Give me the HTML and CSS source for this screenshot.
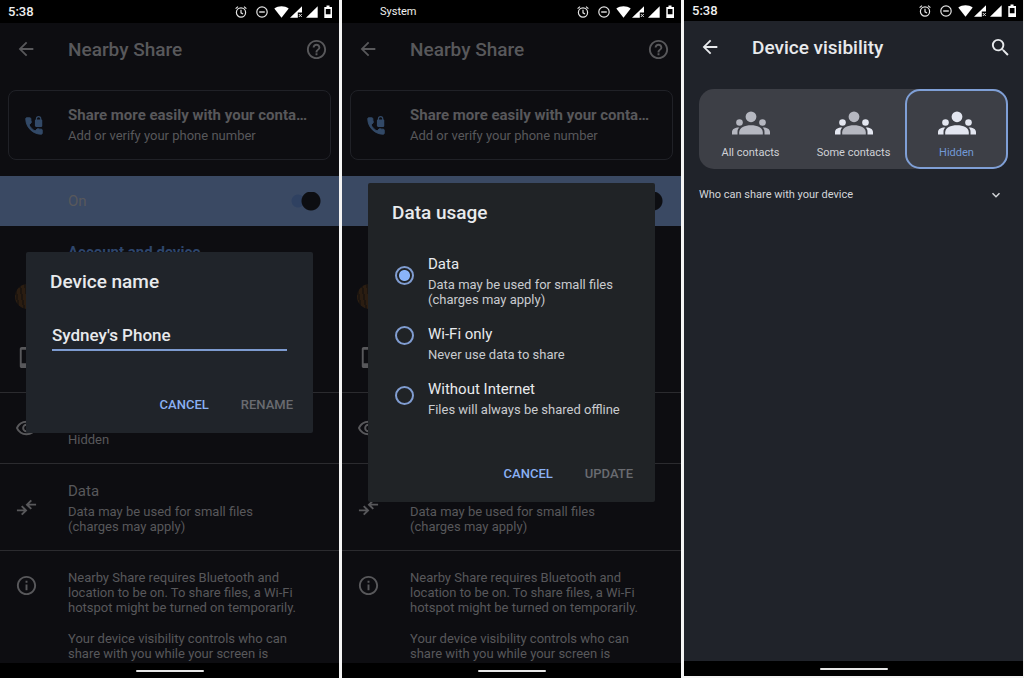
FILE: index.html
```html
<!DOCTYPE html>
<html lang="en">
<head>
<meta charset="utf-8">
<meta name="viewport" content="width=device-width, initial-scale=1">
<title>Nearby Share</title>
<link rel="stylesheet" href="styles.css">
</head>
<body>
<svg class="sprite" aria-hidden="true">
  <symbol id="status" viewBox="0 0 98 16">
    <g fill="none" stroke="#e4e4e4" stroke-width="1.2">
      <circle cx="6" cy="8.5" r="4.6"/><path d="M6 5.8v3l2 1.3M.6 4.6 3 2.6M11.4 4.6 9 2.6"/>
      <circle cx="27" cy="8" r="5.2"/><path d="M24.2 8h5.6" stroke-width="1.4"/>
    </g>
    <g fill="#fff">
      <path d="M39.300 4.600C43.400 1.400 49.600 1.400 53.700 4.600L46.500 13.800Z"/>
      <path d="M67 2.200V8.500H62.800V13.800H55Z"/>
      <path d="M63.800 10l3 3M66.800 10l-3 3" stroke="#ddd" stroke-width="1"/>
      <path d="M82.700 2.200V13.800H71Z"/>
      <path fill-rule="evenodd" d="M91.500 1.500h3v1.500H97V14H89.300V3h2.200ZM90.800 5v5.200h4.700V5Z"/>
    </g>
  </symbol>
  <symbol id="back" viewBox="0 0 24 24"><path d="M20 11H7.830l5.590-5.590L12 4l-8 8 8 8 1.410-1.410L7.830 13H20z"/></symbol>
  <symbol id="help" viewBox="0 0 24 24"><path d="M11 18h2v-2h-2v2zm1-16C6.480 2 2 6.480 2 12s4.480 10 10 10 10-4.480 10-10S17.520 2 12 2zm0 18c-4.410 0-8-3.590-8-8s3.590-8 8-8 8 3.590 8 8-3.590 8-8 8zm0-14c-2.210 0-4 1.790-4 4h2c0-1.100.9-2 2-2s2 .9 2 2c0 2-3 1.750-3 5h2c0-2.250 3-2.500 3-5 0-2.210-1.790-4-4-4z"/></symbol>
  <symbol id="info" viewBox="0 0 24 24"><path d="M11 7h2v2h-2zm0 4h2v6h-2zm1-9C6.480 2 2 6.480 2 12s4.480 10 10 10 10-4.480 10-10S17.520 2 12 2zm0 18c-4.410 0-8-3.590-8-8s3.590-8 8-8 8 3.590 8 8-3.590 8-8 8z"/></symbol>
  <symbol id="phone-lock" viewBox="0 0 24 24"><path d="M20 15.500c-1.250 0-2.450-.2-3.570-.57-.35-.11-.74-.03-1.020.24l-2.200 2.200c-2.830-1.440-5.150-3.750-6.590-6.580l2.200-2.210c.28-.27.36-.66.25-1.010C8.700 6.450 8.500 5.250 8.500 4c0-.55-.45-1-1-1H4c-.55 0-1 .45-1 1 0 9.390 7.610 17 17 17 .55 0 1-.45 1-1v-3.500c0-.55-.45-1-1-1z" stroke="currentColor"/><path d="M20 5v-.8a3 3 0 0 0-6 0V5c-.6 0-1 .45-1 1v6c0 .55.45 1 1 1h6c.55 0 1-.45 1-1V6c0-.55-.45-1-1-1zm-1.300 0h-3.400v-.8a1.700 1.700 0 0 1 3.400 0z"/></symbol>
  <symbol id="device" viewBox="0 0 24 24"><path d="M17 1H7c-1.100 0-2 .9-2 2v18c0 1.100.9 2 2 2h10c1.100 0 2-.9 2-2V3c0-1.100-.9-2-2-2zm0 17H7V4h10z"/></symbol>
  <symbol id="eye" viewBox="0 0 24 24"><path d="M12 6a9.770 9.770 0 0 1 8.820 5.500 9.760 9.760 0 0 1-17.640 0A9.770 9.770 0 0 1 12 6m0-2C7 4 2.730 7.110 1 11.500 2.730 15.890 7 19 12 19s9.270-3.110 11-7.500C21.270 7.110 17 4 12 4zm0 5a2.500 2.500 0 1 1 0 5 2.500 2.500 0 0 1 0-5m0-2a4.500 4.500 0 1 0 0 9 4.500 4.500 0 0 0 0-9z"/></symbol>
  <symbol id="transfer" viewBox="0 0 24 24"><path d="M22 9H13M17 4.500 12.500 9l4.500 4.500M2 15h9M7 10.500l4.500 4.500L7 19.500" fill="none" stroke="currentColor" stroke-width="2"/></symbol>
  <symbol id="search" viewBox="0 0 24 24"><path d="M15.500 14h-.79l-.28-.27A6.470 6.470 0 0 0 16 9.500 6.500 6.500 0 1 0 9.500 16c1.610 0 3.090-.59 4.230-1.570l.27.28v.79l5 4.990L20.490 19zm-6 0a4.500 4.500 0 1 1 0-9 4.500 4.500 0 0 1 0 9z"/></symbol>
  <symbol id="people" viewBox="0 0 38 24">
    <g class="sides"><circle cx="7.500" cy="11.500" r="3.300"/><circle cx="30.500" cy="11.500" r="3.300"/><path d="M0 23.500v-2.300c0-3 3-4.700 7.300-4.600-1.300 1.200-1.800 2.700-1.800 4.300v2.600zM38 23.500v-2.300c0-3-3-4.700-7.300-4.600 1.300 1.200 1.800 2.700 1.800 4.300v2.600z"/></g>
    <g fill="var(--middle)"><circle cx="19" cy="5.800" r="5.400"/><path d="M7.200 23.500v-2.300c0-4.500 5.500-7 11.800-7s11.800 2.500 11.800 7v2.300z"/></g>
  </symbol>
</svg>

<main class="screens">
  <section class="phone dimmed">
    <header class="status"><span class="clock">5:38</span><svg class="status-icons"><use href="#status"/></svg></header>
    <div class="screen">
      <div class="appbar">
        <button class="icon-button" aria-label="Back"><svg class="icon"><use href="#back"/></svg></button>
        <h1 class="title">Nearby Share</h1>
        <button class="icon-button" aria-label="Help"><svg class="icon large"><use href="#help"/></svg></button>
      </div>
      <div class="card">
        <svg class="icon accent"><use href="#phone-lock"/></svg>
        <div class="card-text"><h2 class="card-title">Share more easily with your conta…</h2><p class="body">Add or verify your phone number</p></div>
      </div>
      <label class="band"><span class="name">On</span><input class="switch" type="checkbox" role="switch" checked></label>
      <h2 class="section">Account and device</h2>
      <div class="row account"><span class="avatar"></span></div>
      <div class="row device"><svg class="icon large"><use href="#device"/></svg></div>
      <div class="row ruled visibility"><svg class="icon large"><use href="#eye"/></svg><div class="row-text"><p class="body">Hidden</p></div></div>
      <div class="row ruled data"><svg class="icon large"><use href="#transfer"/></svg><div class="row-text"><h3 class="name">Data</h3><p class="body">Data may be used for small files<br>(charges may apply)</p></div></div>
      <div class="row ruled about"><svg class="icon large"><use href="#info"/></svg><div class="about-text"><p class="body">Nearby Share requires Bluetooth and location to be on. To share files, a Wi-Fi hotspot might be turned on temporarily.</p><p class="body">Your device visibility controls who can share with you while your screen is</p></div></div>
      <div class="overlay">
        <form class="dialog" role="dialog" aria-labelledby="rename-title">
          <h2 class="dialog-title" id="rename-title">Device name</h2>
          <input class="field" type="text" value="Sydney's Phone" aria-labelledby="rename-title">
          <div class="actions"><button class="action" type="button">CANCEL</button><button class="action muted" type="button">RENAME</button></div>
        </form>
      </div>
    </div>
    <footer class="nav"><span class="handle"></span></footer>
  </section>

  <section class="phone dimmed">
    <header class="status"><span class="app-name">System</span><svg class="status-icons"><use href="#status"/></svg></header>
    <div class="screen">
      <div class="appbar">
        <button class="icon-button" aria-label="Back"><svg class="icon"><use href="#back"/></svg></button>
        <h1 class="title">Nearby Share</h1>
        <button class="icon-button" aria-label="Help"><svg class="icon large"><use href="#help"/></svg></button>
      </div>
      <div class="card">
        <svg class="icon accent"><use href="#phone-lock"/></svg>
        <div class="card-text"><h2 class="card-title">Share more easily with your conta…</h2><p class="body">Add or verify your phone number</p></div>
      </div>
      <div class="band"><input class="switch" type="checkbox" role="switch" aria-label="Nearby Share" checked></div>
      <div class="section"></div>
      <div class="row account"><span class="avatar"></span></div>
      <div class="row device"><svg class="icon large"><use href="#device"/></svg></div>
      <div class="row ruled visibility"><svg class="icon large"><use href="#eye"/></svg></div>
      <div class="row ruled data"><svg class="icon large"><use href="#transfer"/></svg><div class="row-text"><p class="body">Data may be used for small files<br>(charges may apply)</p></div></div>
      <div class="row ruled about"><svg class="icon large"><use href="#info"/></svg><div class="about-text"><p class="body">Nearby Share requires Bluetooth and location to be on. To share files, a Wi-Fi hotspot might be turned on temporarily.</p><p class="body">Your device visibility controls who can share with you while your screen is</p></div></div>
      <div class="overlay">
        <form class="dialog neutral" role="dialog" aria-labelledby="usage-title">
          <h2 class="dialog-title" id="usage-title">Data usage</h2>
          <fieldset class="options" aria-labelledby="usage-title">
            <div class="radios">
              <input class="radio" type="radio" name="usage" id="use-data" checked>
              <input class="radio" type="radio" name="usage" id="use-wifi">
              <input class="radio" type="radio" name="usage" id="use-none">
            </div>
            <div class="labels">
              <label class="option" for="use-data"><span class="name">Data</span><span class="body">Data may be used for small files<br>(charges may apply)</span></label>
              <label class="option" for="use-wifi"><span class="name">Wi-Fi only</span><span class="body">Never use data to share</span></label>
              <label class="option" for="use-none"><span class="name">Without Internet</span><span class="body">Files will always be shared offline</span></label>
            </div>
          </fieldset>
          <div class="actions"><button class="action" type="button">CANCEL</button><button class="action muted" type="button">UPDATE</button></div>
        </form>
      </div>
    </div>
    <footer class="nav"><span class="handle"></span></footer>
  </section>

  <section class="phone bright">
    <header class="status"><span class="clock">5:38</span><svg class="status-icons"><use href="#status"/></svg></header>
    <div class="screen">
      <div class="appbar">
        <button class="icon-button" aria-label="Back"><svg class="icon"><use href="#back"/></svg></button>
        <h1 class="title">Device visibility</h1>
        <button class="icon-button" aria-label="Search"><svg class="icon large"><use href="#search"/></svg></button>
      </div>
      <div class="segments">
        <button class="segment all"><svg class="people"><use href="#people"/></svg>All contacts</button>
        <button class="segment some"><svg class="people"><use href="#people"/></svg>Some contacts</button>
        <button class="segment selected" aria-pressed="true"><svg class="people"><use href="#people"/></svg>Hidden</button>
      </div>
      <button class="expander">Who can share with your device<svg class="chevron" viewBox="0 0 10 10"><path d="M1.500 3.200 5 6.700l3.500-3.500"/></svg></button>
    </div>
    <footer class="nav"><span class="handle"></span></footer>
  </section>
</main>
</body>
</html>
```
FILE: styles.css
```css
* { box-sizing: border-box; }

body {
  margin: 0;
  background: #f4f4f4;
  font-family: Roboto, "Liberation Sans", sans-serif;
}

h1, h2, h3, p { margin: 0; font-weight: 400; }

button {
  margin: 0;
  padding: 0;
  border: 0;
  background: none;
  color: inherit;
  font: inherit;
}

.sprite { position: absolute; width: 0; height: 0; }

.screens {
  display: grid;
  grid-template-columns: repeat(3, minmax(0, 1fr));
  gap: 3px;
  height: 100vh;
  padding-right: 1px;
}

.phone { display: flex; flex-direction: column; min-height: 0; }
.dimmed { background: #0d0d11; color: #58585b; }
.bright { margin-bottom: 2px; background: #20232a; color: #e8eaed; }

.status {
  display: flex;
  flex: none;
  align-items: center;
  height: 23px;
  padding: 0 6px 0 8px;
  background: #000;
  color: #f0f0f0;
}
.bright .status { height: 21px; }
.clock { font-size: 13px; font-weight: 500; }
.app-name { padding-left: 30px; font-size: 11px; }
.status-icons { width: 98px; height: 16px; margin-left: auto; }

.screen {
  position: relative;
  flex: 1;
  min-height: 0;
  overflow: hidden;
}

.icon { flex: none; width: 22px; height: 22px; fill: currentColor; }
.large { width: 23px; height: 23px; }
.accent { color: #324967; }

.appbar {
  display: flex;
  align-items: center;
  height: 52px;
  padding: 0 11px 0 15px;
}
.appbar .title { flex: 1; padding-left: 31px; font-size: 19px; font-weight: 500; }
.icon-button { display: flex; }

.card {
  display: flex;
  align-items: center;
  gap: 23px;
  height: 70px;
  margin: 15px 8px 16px;
  padding: 2px 16px 0 14px;
  border: 1px solid #202127;
  border-radius: 8px;
}
.card-text { flex: 1; min-width: 0; }
.card-title {
  font-size: 15px;
  font-weight: 700;
  line-height: 20px;
  white-space: nowrap;
}
.card .body { line-height: 22px; }
.body { font-size: 13px; line-height: 15px; }
.name { font-size: 15px; line-height: 18px; }

.band {
  display: flex;
  align-items: center;
  height: 50px;
  padding: 0 18px 0 68px;
  background: #3a4963;
}
.switch {
  appearance: none;
  width: 30px;
  height: 19px;
  margin: 0 0 0 auto;
  background:
    radial-gradient(circle at 20px 9px, #0d0e12 9px, transparent 10px),
    radial-gradient(circle at 7px 9px, #2f4161 6px, transparent 7px);
}

.section {
  height: 44px;
  padding: 18px 0 0 68px;
  color: #2e466d;
  font-size: 15px;
  font-weight: 700;
  line-height: 16px;
}

.row {
  display: flex;
  align-items: center;
  gap: 30px;
  padding: 0 30px 0 15px;
}
.ruled { border-top: 1px solid #2b2b2f; }
.account { height: 52px; }
.device { height: 70px; }
.visibility { height: 71px; }
.data { height: 87px; }
.about { align-items: flex-start; padding-top: 19px; }
.about .icon { margin-top: 4px; }
.avatar {
  width: 25px;
  height: 25px;
  border-radius: 50%;
  background: repeating-linear-gradient(80deg, #2b1d11 0 3px, #1d150f 3px 5px);
}
.row-text {
  display: flex;
  flex-direction: column;
  align-self: flex-end;
  gap: 4px;
  padding-bottom: 16px;
}
.about-text { display: flex; flex-direction: column; gap: 16px; }

.overlay {
  position: absolute;
  inset: 0;
  display: grid;
  align-items: center;
  padding: 0 26px 2px;
}
.dialog {
  padding: 20px 20px 18px 24px;
  border-radius: 2px;
  background: #20242a;
  color: #e8eaed;
}
.neutral { padding-right: 22px; background: #202326; }
.dialog-title { font-size: 19px; font-weight: 500; line-height: 20px; }
.field {
  display: block;
  width: calc(100% - 8px);
  height: 27px;
  margin: 32px 0 0 2px;
  padding: 0 0 2px;
  border: 0;
  border-bottom: 2px solid #7d9bd0;
  border-radius: 0;
  outline: 0;
  background: none;
  color: inherit;
  font: 500 17px/20px Roboto, "Liberation Sans", sans-serif;
}
.actions {
  display: flex;
  justify-content: flex-end;
  gap: 32px;
  margin-top: 44px;
}
.action { color: #8ab0f3; font-size: 13px; font-weight: 500; line-height: 20px; }
.muted { color: #696b70; }

.options {
  display: flex;
  gap: 14px;
  min-width: 0;
  margin: 32px 0 0;
  padding: 0 0 3px 3px;
  border: 0;
}
.radios { display: flex; flex-direction: column; gap: 41px; padding-top: 11px; }
.radio {
  appearance: none;
  width: 19px;
  height: 19px;
  margin: 0;
  border: 2px solid #809dd1;
  border-radius: 50%;
}
.radio:checked { background: radial-gradient(circle, #8ab4f8 5px, transparent 6px); }
.labels { display: flex; flex-direction: column; gap: 18px; }
.option { display: flex; flex-direction: column; gap: 4px; }
.option .body { color: #c9cbcf; }

.segments {
  display: grid;
  grid-template-columns: repeat(3, 1fr);
  height: 80px;
  margin: 16px 15px;
  border-radius: 15px;
  background: #3d3f46;
}
.segment {
  display: flex;
  flex-direction: column;
  align-items: center;
  padding-top: 22px;
  border-radius: 15px;
  color: #cfd1d6;
  font-size: 11px;
  line-height: 14px;
}
.people { --middle: #b5b7c0; width: 38px; height: 24px; margin-bottom: 11px; fill: #b5b7c0; }
.some .people { fill: #e3e6f0; }
.selected { padding-top: 20px; border: 2px solid #7f9fd6; color: #7299d6; }
.selected .people { --middle: #e3e6f0; fill: #e3e6f0; }

.expander {
  display: flex;
  align-items: center;
  justify-content: space-between;
  width: 100%;
  padding: 1px 22px 0 15px;
  color: #d3d5d9;
  font-size: 11px;
  line-height: 18px;
}
.chevron { width: 10px; height: 10px; fill: none; stroke: currentColor; stroke-width: 1.5; }

.nav {
  display: flex;
  flex: none;
  align-items: center;
  justify-content: center;
  height: 15px;
  background: #000;
}
.handle { width: 68px; height: 2px; border-radius: 1px; background: #e6e6e6; }
```
